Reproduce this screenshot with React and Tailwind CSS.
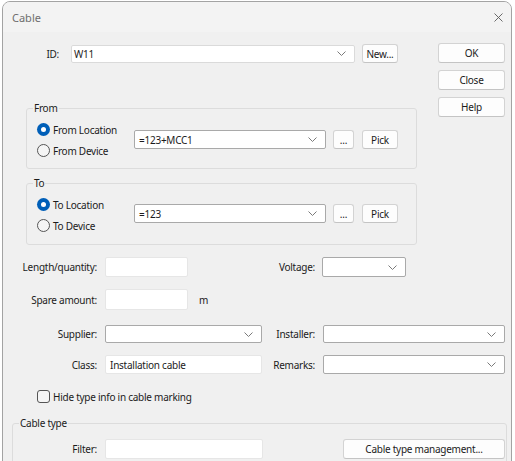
import React from "react";

const font = { fontFamily: '"Noto Sans", "Open Sans", sans-serif' };

function Chevron() {
  return (
    <svg width="9" height="5" viewBox="0 0 9 5" className="shrink-0">
      <path d="M0.5 0.5 L4.5 4.5 L8.5 0.5" fill="none" stroke="#7a7a7a" strokeWidth="1" />
    </svg>
  );
}

function Combo({ w, h = "h-[19px]", value, dark, extra = "", pl = "pl-[4px]" }) {
  return (
    <div
      className={`flex items-center justify-between bg-white ${pl} pr-[8px] ${h} ${w} border ${
        dark ? "border-[#a9a9a9]" : "border-[#dadada]"
      } rounded-[2px] ${extra}`}
    >
      <span className="text-[10px] text-[#1b1b1b] leading-none">{value}</span>
      <Chevron />
    </div>
  );
}

function Btn({ children, cls }) {
  return (
    <div
      className={`flex items-center justify-center bg-[#fdfdfd] border border-[#d3d3d3] border-b-[#c4c4c4] rounded-[3px] text-[10px] text-[#1b1b1b] leading-none ${cls}`}
    >
      {children}
    </div>
  );
}

function Radio({ checked, label }) {
  return (
    <div className="flex items-center h-[21px]">
      {checked ? (
        <div className="w-[13px] h-[13px] rounded-full bg-[#005fb8] flex items-center justify-center">
          <div className="w-[5px] h-[5px] rounded-full bg-white" />
        </div>
      ) : (
        <div className="w-[13px] h-[13px] rounded-full border border-[#555555] bg-[#f5f5f5]" />
      )}
      <span className="ml-[3px] text-[10px] text-[#1b1b1b] leading-none">{label}</span>
    </div>
  );
}

function Input({ w, h = "h-[20px]", value }) {
  return (
    <div className={`flex items-center bg-white border border-[#e6e6e6] rounded-[2px] pl-[4px] ${w} ${h}`}>
      <span className="text-[10px] text-[#1b1b1b] leading-none">{value}</span>
    </div>
  );
}

function Group({ label, cls, children }) {
  return (
    <div className={`relative border border-[#dcdcdc] rounded-[3px] ${cls}`}>
      <span className="absolute left-[6px] top-[-8px] px-[1px] bg-[#f0f0f0] text-[10px] text-[#1b1b1b] leading-[14px]">
        {label}
      </span>
      {children}
    </div>
  );
}

function Label({ children, w }) {
  return (
    <div className={`${w} shrink-0 text-right text-[10px] text-[#1b1b1b] leading-none`}>{children}</div>
  );
}

export default function App() {
  return (
    <div className="w-[515px] h-[461px] overflow-hidden bg-white tracking-[-0.25px]" style={font}>
      <div className="ml-[2px] mt-[1px] w-[510px] h-[470px] border border-[#a3a3a3] rounded-t-[8px] bg-[#f0f0f0] overflow-hidden">
        {/* Title bar */}
        <div className="h-[30px] bg-[#f3f3f3] flex items-center justify-between pl-[9px] pr-[8px]">
          <span className="text-[11px] text-[#6e6e6e] leading-none tracking-normal">Cable</span>
          <svg width="9" height="9" viewBox="0 0 9 9">
            <path d="M0.5 0.5 L8.5 8.5 M8.5 0.5 L0.5 8.5" stroke="#5a5a5a" strokeWidth="0.9" fill="none" />
          </svg>
        </div>

        {/* Top section */}
        <div className="flex mt-[11px]">
          <div className="w-[414px] shrink-0">
            <div className="flex items-center mt-[1px] h-[19px]">
              <Label w="w-[56px]">ID:</Label>
              <Combo w="w-[284px]" h="h-[18px]" value="W11" pl="pl-[2px]" extra="ml-[12px]" />
              <Btn cls="ml-[7px] w-[36px] h-[19px]">New...</Btn>
            </div>

            <Group label="From" cls="ml-[23px] mt-[45px] w-[391px] h-[61px]">
              <div className="flex items-start pt-[10px] pl-[10px]">
                <div className="w-[97px] flex flex-col">
                  <Radio checked label="From Location" />
                  <Radio label="From Device" />
                </div>
                <Combo w="w-[192px]" value="=123+MCC1" dark extra="mt-[11px]" />
                <Btn cls="ml-[7px] mt-[11px] w-[21px] h-[19px]">...</Btn>
                <Btn cls="ml-[8px] mt-[11px] w-[36px] h-[19px]">Pick</Btn>
              </div>
            </Group>

            <Group label="To" cls="ml-[23px] mt-[14px] w-[391px] h-[62px]">
              <div className="flex items-start pt-[10px] pl-[10px]">
                <div className="w-[97px] flex flex-col">
                  <Radio checked label="To Location" />
                  <Radio label="To Device" />
                </div>
                <Combo w="w-[192px]" value="=123" dark extra="mt-[10px]" />
                <Btn cls="ml-[7px] mt-[10px] w-[21px] h-[19px]">...</Btn>
                <Btn cls="ml-[8px] mt-[10px] w-[36px] h-[19px]">Pick</Btn>
              </div>
            </Group>
          </div>

          <div className="ml-[21px] flex flex-col gap-[7px]">
            <Btn cls="w-[67px] h-[20px]">OK</Btn>
            <Btn cls="w-[67px] h-[20px]">Close</Btn>
            <Btn cls="w-[67px] h-[20px]">Help</Btn>
          </div>
        </div>

        {/* Lower section */}
        <div className="flex items-center mt-[12px] h-[20px]">
          <Label w="w-[94px]">Length/quantity:</Label>
          <div className="ml-[8px] w-[157px]">
            <Input w="w-[83px]" />
          </div>
          <Label w="w-[53px]">Voltage:</Label>
          <Combo w="w-[84px]" h="h-[20px]" dark extra="ml-[7px]" />
        </div>

        <div className="flex items-center mt-[12px] h-[21px]">
          <Label w="w-[94px]">Spare amount:</Label>
          <div className="ml-[8px] w-[157px] flex items-center">
            <Input w="w-[83px]" h="h-[21px]" />
            <span className="ml-[11px] text-[10px] text-[#1b1b1b] leading-none">m</span>
          </div>
        </div>

        <div className="flex items-center mt-[15px] h-[18px]">
          <Label w="w-[94px]">Supplier:</Label>
          <Combo w="w-[157px]" h="h-[18px]" dark extra="ml-[8px]" />
          <Label w="w-[53px]">Installer:</Label>
          <Combo w="w-[182px]" h="h-[18px]" dark extra="ml-[8px]" />
        </div>

        <div className="flex items-center mt-[12px] h-[19px]">
          <Label w="w-[94px]">Class:</Label>
          <div className="ml-[8px]">
            <Input w="w-[157px]" h="h-[19px]" value="Installation cable" />
          </div>
          <Label w="w-[53px]">Remarks:</Label>
          <Combo w="w-[182px]" h="h-[19px]" dark extra="ml-[8px]" />
        </div>

        <div className="flex items-center mt-[14px] h-[17px] pl-[34px]">
          <div className="w-[13px] h-[13px] rounded-[3px] border border-[#555555] bg-[#f5f5f5]" />
          <span className="ml-[3px] text-[10px] text-[#1b1b1b] leading-none">Hide type info in cable marking</span>
        </div>

        <Group label="Cable type" cls="ml-[9px] mt-[18px] w-[495px] h-[60px]">
          <div className="flex items-center mt-[15px] h-[20px]">
            <Label w="w-[84px]">Filter:</Label>
            <div className="ml-[8px]">
              <Input w="w-[158px]" />
            </div>
            <Btn cls="ml-[80px] w-[162px] h-[20px]">Cable type management...</Btn>
          </div>
        </Group>
      </div>
    </div>
  );
}
